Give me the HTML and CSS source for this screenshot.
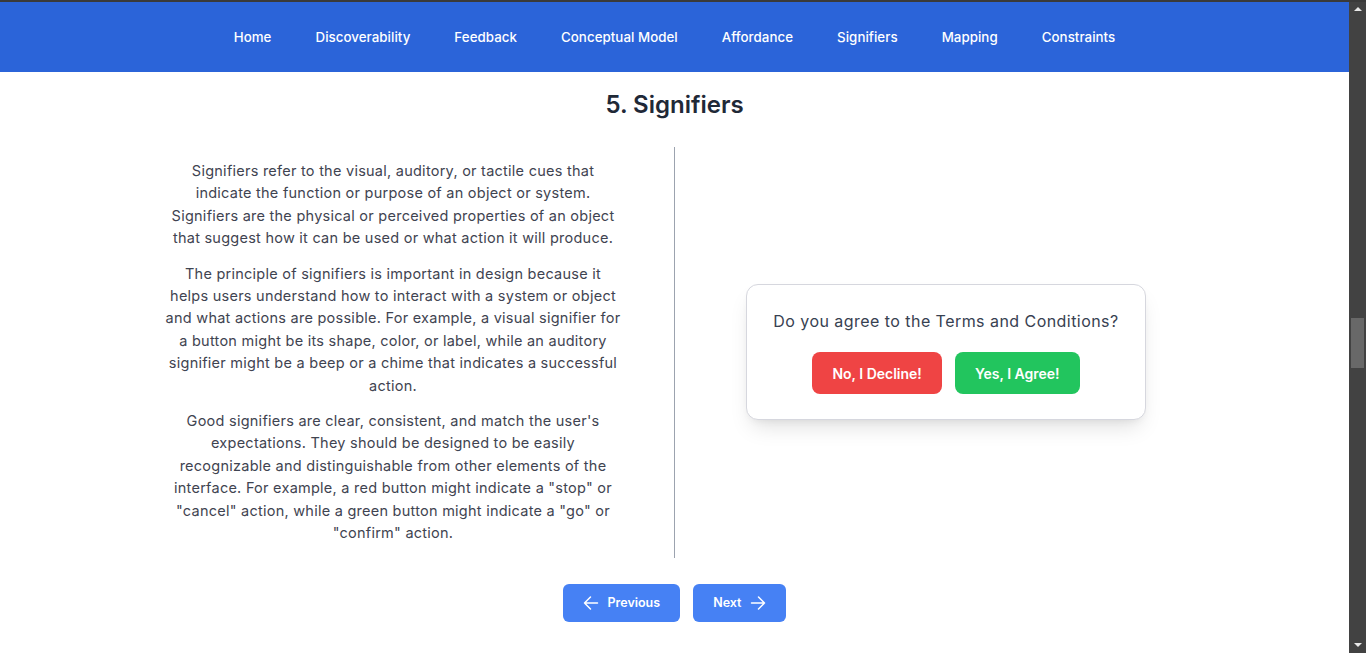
FILE: index.html
```html
<!DOCTYPE html>
<html lang="en">
<head>
<meta charset="utf-8">
<title>Signifiers</title>
<link rel="stylesheet" href="styles.css">
</head>
<body>
<div class="topbar"></div>
<div class="frame">
  <div class="page">
    <nav class="nav">
      <a href="#">Home</a>
      <a href="#">Discoverability</a>
      <a href="#">Feedback</a>
      <a href="#">Conceptual Model</a>
      <a href="#">Affordance</a>
      <a href="#">Signifiers</a>
      <a href="#">Mapping</a>
      <a href="#">Constraints</a>
    </nav>
    <main class="main">
      <h1 class="title">5. Signifiers</h1>
      <section class="columns">
        <div class="text-col">
          <p>Signifiers refer to the visual, auditory, or tactile cues that<br>indicate the function or purpose of an object or system.<br>Signifiers are the physical or perceived properties of an object<br>that suggest how it can be used or what action it will produce.</p>
          <p>The principle of signifiers is important in design because it<br>helps users understand how to interact with a system or object<br>and what actions are possible. For example, a visual signifier for<br>a button might be its shape, color, or label, while an auditory<br>signifier might be a beep or a chime that indicates a successful<br>action.</p>
          <p>Good signifiers are clear, consistent, and match the user's<br>expectations. They should be designed to be easily<br>recognizable and distinguishable from other elements of the<br>interface. For example, a red button might indicate a "stop" or<br>"cancel" action, while a green button might indicate a "go" or<br>"confirm" action.</p>
        </div>
        <div class="demo-col">
          <div class="card">
            <p class="question">Do you agree to the Terms and Conditions?</p>
            <div class="choices">
              <button class="btn btn-red">No, I Decline!</button>
              <button class="btn btn-green">Yes, I Agree!</button>
            </div>
          </div>
        </div>
      </section>
      <div class="pager">
        <a class="pbtn" href="#"><svg width="16" height="16" viewBox="0 0 16 16" fill="none" stroke="currentColor" stroke-width="1.5" stroke-linecap="round" stroke-linejoin="round"><path d="M14.5 8H1.5M7.5 2 1.5 8l6 6"/></svg>Previous</a>
        <a class="pbtn" href="#">Next<svg width="16" height="16" viewBox="0 0 16 16" fill="none" stroke="currentColor" stroke-width="1.5" stroke-linecap="round" stroke-linejoin="round"><path d="M1.5 8h13M8.5 2l6 6-6 6"/></svg></a>
      </div>
    </main>
  </div>
  <div class="scrollbar">
    <span class="arrow-up"></span>
    <div class="track"><div class="thumb"></div></div>
    <span class="arrow-down"></span>
  </div>
</div>
</body>
</html>
```
FILE: styles.css
```css
* { box-sizing: border-box; }
html, body { margin: 0; padding: 0; height: 100%; overflow: hidden; }
body {
  font-family: Inter, "Open Sans", sans-serif;
  color: #374151;
  background: #fff;
}
.topbar { height: 2px; background: #3a3a3a; }
.frame { display: flex; height: 651px; }
.page { flex: 1; min-width: 0; background: #fff; }

.nav {
  height: 70px;
  background: #2b64d9;
  display: flex;
  justify-content: center;
  align-items: center;
  gap: 44px;
}
.nav a {
  color: #fff;
  text-decoration: none;
  font-size: 13.3px;
  font-weight: 500;
  letter-spacing: 0.05px;
}

.title {
  margin: 17px 0 26px;
  text-align: center;
  font-size: 24px;
  line-height: 32px;
  font-weight: 600;
  color: #1f2937;
}

.columns {
  display: flex;
  padding: 0 132px 0 112px;
}
.text-col {
  width: 563px;
  border-right: 1px solid #9ca3af;
  text-align: center;
  font-size: 14.5px;
  letter-spacing: 0.25px;
  line-height: 22.4px;
  color: #3f4451;
  white-space: nowrap;
}
.text-col p { margin: 13px 0; }
.demo-col {
  flex: 1;
  display: flex;
  align-items: center;
  justify-content: center;
}
.card {
  width: 400px;
  border: 1px solid #d6d7de;
  border-radius: 12px;
  padding: 24px 24px 25px;
  text-align: center;
  box-shadow: 0 12px 22px -6px rgba(0,0,0,0.13), 0 4px 8px -4px rgba(0,0,0,0.08);
  background: #fff;
}
.question {
  margin: 0 0 19px;
  font-size: 16px;
  letter-spacing: 0.45px;
  line-height: 24px;
  color: #374151;
}
.choices { display: flex; justify-content: center; gap: 13px; }
.btn {
  border: 0;
  height: 42px;
  padding: 0 20px;
  border-radius: 8px;
  color: #fff;
  font-family: Inter, sans-serif;
  font-size: 14px;
  font-weight: 600;
}
.btn-red { background: #ef4444; }
.btn-green { background: #22c55e; }

.pager {
  margin-top: 26px;
  display: flex;
  justify-content: center;
  gap: 13px;
}
.pbtn {
  height: 38px;
  display: flex;
  align-items: center;
  gap: 8px;
  padding: 0 20px;
  background: #4681f4;
  color: #fff;
  border-radius: 6px;
  text-decoration: none;
  font-size: 12.5px;
  font-weight: 600;
}

.scrollbar {
  width: 17px;
  background: #424242;
  display: flex;
  flex-direction: column;
  align-items: center;
}
.arrow-up, .arrow-down {
  width: 0; height: 0;
  border-left: 4px solid transparent;
  border-right: 4px solid transparent;
}
.arrow-up { margin-top: 5px; border-bottom: 4px solid #e8e8e8; }
.arrow-down { margin-bottom: 6px; border-top: 4px solid #e8e8e8; }
.track { flex: 1; width: 100%; padding-top: 307px; display: flex; justify-content: center; }
.thumb { width: 13px; height: 50px; background: #686868; }
```
